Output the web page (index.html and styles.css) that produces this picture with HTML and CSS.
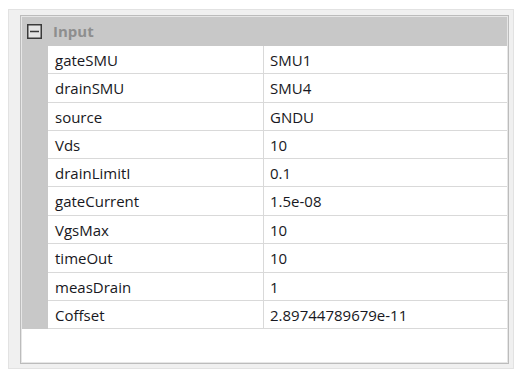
FILE: index.html
```html
<!DOCTYPE html>
<html>
<head>
<meta charset="utf-8">
<link rel="stylesheet" href="styles.css">
</head>
<body>
<div class="panel">
  <div class="grid-frame">
    <div class="grid">
      <div class="category">
        <div class="toggle"><svg width="15" height="15" viewBox="0 0 15 15"><rect x="0.75" y="0.75" width="13.5" height="13.5" fill="#e4e4e4" stroke="#3a3a3a" stroke-width="1.5"/><line x1="3" y1="7.5" x2="12" y2="7.5" stroke="#3a3a3a" stroke-width="1.5"/></svg></div>
        <div class="cat-label">Input</div>
      </div>
      <div class="row"><div class="gutter"></div><div class="name">gateSMU</div><div class="value">SMU1</div></div>
      <div class="row tall"><div class="gutter"></div><div class="name">drainSMU</div><div class="value">SMU4</div></div>
      <div class="row"><div class="gutter"></div><div class="name">source</div><div class="value">GNDU</div></div>
      <div class="row"><div class="gutter"></div><div class="name">Vds</div><div class="value">10</div></div>
      <div class="row"><div class="gutter"></div><div class="name">drainLimitI</div><div class="value">0.1</div></div>
      <div class="row tall"><div class="gutter"></div><div class="name">gateCurrent</div><div class="value">1.5e-08</div></div>
      <div class="row"><div class="gutter"></div><div class="name">VgsMax</div><div class="value">10</div></div>
      <div class="row tall"><div class="gutter"></div><div class="name">timeOut</div><div class="value">10</div></div>
      <div class="row"><div class="gutter"></div><div class="name">measDrain</div><div class="value">1</div></div>
      <div class="row"><div class="gutter"></div><div class="name">Coffset</div><div class="value">2.89744789679e-11</div></div>
    </div>
  </div>
</div>
</body>
</html>
```

FILE: styles.css
```css
html, body {
  margin: 0;
  padding: 0;
  background: #ffffff;
}
body {
  padding: 9px 0 0 8px;
  font-family: "Open Sans", "Noto Sans", sans-serif;
  font-size: 15px;
  color: #181822;
}
.panel {
  box-sizing: border-box;
  width: 506px;
  height: 360px;
  background: #f0f0f0;
  border: 1px solid #e2e2e2;
  padding: 5px 0 0 11px;
}
.grid-frame {
  box-sizing: border-box;
  width: 489px;
  height: 349px;
  border: 1px solid #bcbcbc;
  padding: 1px;
  background: #e6e6e6;
}
.grid {
  width: 100%;
  height: 100%;
  background: #ffffff;
  display: flex;
  flex-direction: column;
}
.category {
  height: 29px;
  background: #c8c8c8;
  display: flex;
  align-items: center;
  flex-shrink: 0;
}
.toggle {
  width: 15px;
  height: 15px;
  margin-left: 5px;
  display: flex;
}
.cat-label {
  margin-left: 11px;
  font-weight: 700;
  color: #8e8e8e;
  line-height: 29px;
}
.row {
  display: flex;
  height: 28px;
  flex-shrink: 0;
}
.row.tall {
  height: 29px;
}
.gutter {
  width: 26px;
  background: #c8c8c8;
  flex-shrink: 0;
}
.name, .value {
  box-sizing: border-box;
  height: 100%;
  padding-top: 1px;
  line-height: 26px;
  border-bottom: 1px solid #d9d9d9;
  white-space: nowrap;
}
.name {
  width: 216px;
  padding-left: 7px;
  border-right: 1px solid #d9d9d9;
}
.value {
  flex: 1;
  padding-left: 6px;
}
```
